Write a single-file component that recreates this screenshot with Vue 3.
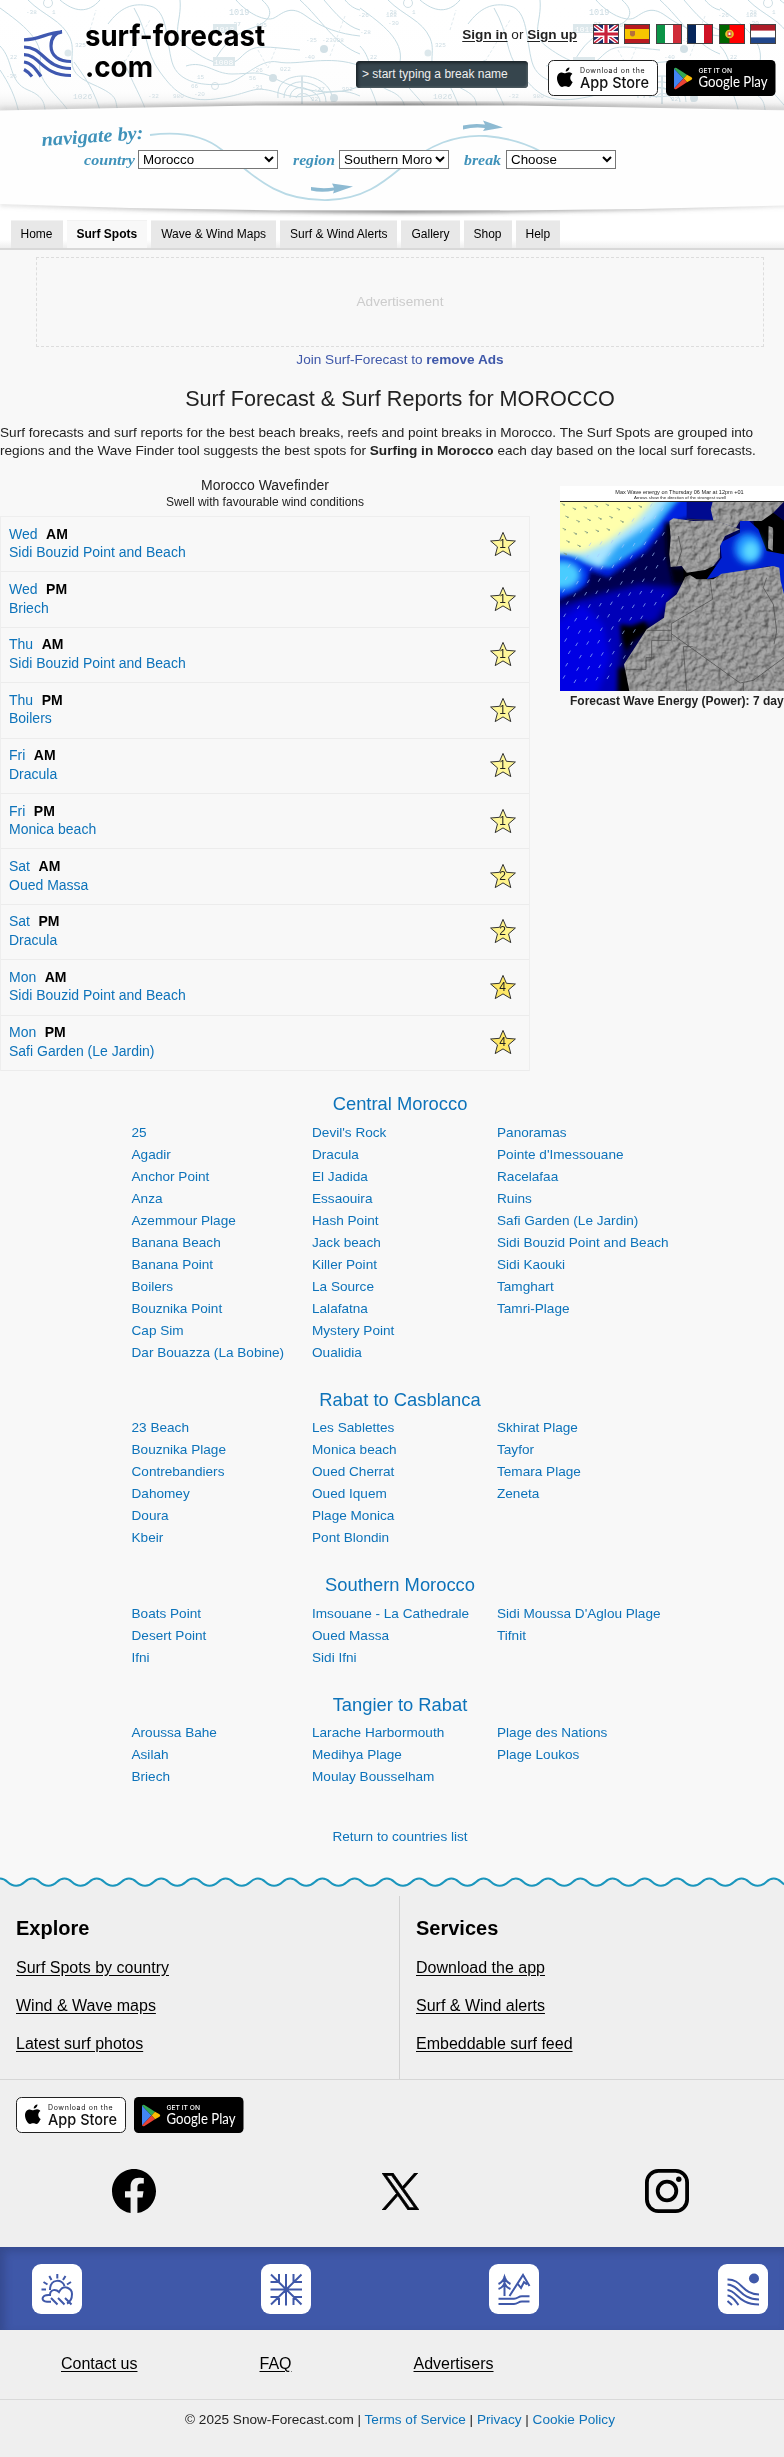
<script setup>
const tabs = ['Home', 'Surf Spots', 'Wave & Wind Maps', 'Surf & Wind Alerts', 'Gallery', 'Shop', 'Help']

const finder = [
  ['Wed', 'AM', 'Sidi Bouzid Point and Beach', 1],
  ['Wed', 'PM', 'Briech', 1],
  ['Thu', 'AM', 'Sidi Bouzid Point and Beach', 1],
  ['Thu', 'PM', 'Boilers', 1],
  ['Fri', 'AM', 'Dracula', 1],
  ['Fri', 'PM', 'Monica beach', 1],
  ['Sat', 'AM', 'Oued Massa', 2],
  ['Sat', 'PM', 'Dracula', 2],
  ['Mon', 'AM', 'Sidi Bouzid Point and Beach', 4],
  ['Mon', 'PM', 'Safi Garden (Le Jardin)', 4],
]

const regions = [
  {
    name: 'Central Morocco',
    cols: [
      ['25', 'Agadir', 'Anchor Point', 'Anza', 'Azemmour Plage', 'Banana Beach', 'Banana Point', 'Boilers', 'Bouznika Point', 'Cap Sim', 'Dar Bouazza (La Bobine)'],
      ["Devil's Rock", 'Dracula', 'El Jadida', 'Essaouira', 'Hash Point', 'Jack beach', 'Killer Point', 'La Source', 'Lalafatna', 'Mystery Point', 'Oualidia'],
      ['Panoramas', "Pointe d'Imessouane", 'Racelafaa', 'Ruins', 'Safi Garden (Le Jardin)', 'Sidi Bouzid Point and Beach', 'Sidi Kaouki', 'Tamghart', 'Tamri-Plage'],
    ],
  },
  {
    name: 'Rabat to Casblanca',
    cols: [
      ['23 Beach', 'Bouznika Plage', 'Contrebandiers', 'Dahomey', 'Doura', 'Kbeir'],
      ['Les Sablettes', 'Monica beach', 'Oued Cherrat', 'Oued Iquem', 'Plage Monica', 'Pont Blondin'],
      ['Skhirat Plage', 'Tayfor', 'Temara Plage', 'Zeneta'],
    ],
  },
  {
    name: 'Southern Morocco',
    cols: [
      ['Boats Point', 'Desert Point', 'Ifni'],
      ['Imsouane - La Cathedrale', 'Oued Massa', 'Sidi Ifni'],
      ["Sidi Moussa D'Aglou Plage", 'Tifnit'],
    ],
  },
  {
    name: 'Tangier to Rabat',
    cols: [
      ['Aroussa Bahe', 'Asilah', 'Briech'],
      ['Larache Harbormouth', 'Medihya Plage', 'Moulay Bousselham'],
      ['Plage des Nations', 'Plage Loukos'],
    ],
  },
]

const explore = ['Surf Spots by country', 'Wind & Wave maps', 'Latest surf photos']
const services = ['Download the app', 'Surf & Wind alerts', 'Embeddable surf feed']

const step = 32.24
let wave = 'M-16.1 8.8'
for (let i = 0; i < 26; i++) {
  const x = i * step - 16.1
  wave += ` C${x + 9} 8.8 ${x + 8} 1.6 ${x + 16.1} 1.6 S${x + 23.2} 8.8 ${x + step} 8.8`
}
const waveFill = wave + ' V12 H-16 Z'

// Pressure-chart contours behind the masthead, one tile 360px wide
const contours = [
  'M0 8 C22 24 44 40 40 62 S62 96 74 120',
  'M28 0 C44 16 62 20 70 38 S60 70 92 84 S112 100 120 116',
  'M0 46 C14 60 8 82 28 90 S44 108 46 120',
  'M0 70 C8 82 16 96 20 118',
  'M108 24 C120 8 132 2 150 6 S166 40 172 62 S206 86 224 84 S258 58 278 62 S330 54 360 66',
  'M134 8 C150 36 144 50 160 72 S188 104 222 98 S252 84 282 94 S330 82 360 96',
  'M180 0 C182 22 170 34 186 46 S226 72 240 58 S258 46 300 50',
  'M236 0 C248 14 266 22 274 18 S290 4 306 16 S340 34 360 36',
  'M262 0 C276 12 270 22 252 28 S222 46 214 62',
  'M300 0 C322 20 334 44 360 54',
  'M324 0 C336 14 346 26 360 30',
  'M345 0 C350 6 355 9 360 10',
  'M186 66 C204 60 214 74 232 74 S260 70 274 78 S330 100 360 86',
  'M278 98 C276 80 292 76 303 76 S334 84 332 102',
  'M284 98 C284 86 294 81 303 82 S326 88 326 102',
  'M290 98 C290 90 298 86 304 88 S320 94 320 102',
  'M296 98 C298 92 308 91 313 101',
  'M74 62 C84 76 96 92 102 118',
  'M124 60 C130 80 144 100 148 118',
  'M60 0 C74 12 88 14 100 0',
]
const marks = [
  ['1019', 229, 15, 8.5], ['-38', 26, 14, 6], ['1', 52, 14, 6], ['-26', 358, 17, 6], ['188', 386, 17, 6],
  ['-28', 360, 34, 6], ['-30', 388, 25, 6], ['-35', 306, 42, 6], ['-23', 322, 42, 6], ['098', 333, 42, 6],
  ['-40', 304, 59, 6], ['-26', 252, 72, 6], ['56', 249, 80, 6], ['022', 280, 71, 6], ['-31', 252, 89, 6],
  ['1026', 73, 99, 8], ['-36', 6, 78, 6], ['22', 10, 59, 6], ['325', 75, 47, 6], ['15', 197, 79, 6],
  ['66', 191, 88, 6], ['980', 173, 98, 6], ['-20', 194, 96, 6], ['-27', 314, 91, 6], ['992', 342, 91, 6],
  ['195', 256, 27, 6], ['-37', 230, 26, 6], ['32', 311, 101, 6], ['-32', 148, 98, 6],
]

const arrows = []
for (let i = 0; i < 15; i++) {
  for (let j = 0; j < 11; j++) {
    const y = 100 + i * 37 + ((j * 13) % 17)
    const x = 70 + j * 33 + ((i * 11) % 19)
    const limit = y < 320 ? 375 : y < 430 ? 375 - (y - 320) * 0.1 : 340 - (y - 430) * 0.62
    if (x < limit && y < 650) arrows.push({ x, y, dark: x + (y - 100) * 1.6 < 330 })
  }
}
</script>

<template>
  <div class="page">
    <header class="masthead">
      <svg class="backdrop" width="784" height="250" viewBox="0 0 784 250" aria-hidden="true">
        <defs>
          <linearGradient id="fade" x1="0" x2="0" y1="0" y2="1">
            <stop offset="0" stop-color="#fff" stop-opacity="0" />
            <stop offset=".82" stop-color="#eee" stop-opacity=".1" />
            <stop offset="1" stop-color="#bbb" stop-opacity=".4" />
          </linearGradient>
          <linearGradient id="edge" x1="0" x2="1" y1="0" y2="0">
            <stop offset="0" stop-color="#aaa" stop-opacity=".35" />
            <stop offset=".5" stop-color="#555" />
            <stop offset="1" stop-color="#aaa" stop-opacity=".35" />
          </linearGradient>
          <linearGradient id="shelf" x1="0" x2="0" y1="0" y2="1">
            <stop offset="0" stop-color="#fff" />
            <stop offset=".7" stop-color="#fff" />
            <stop offset="1" stop-color="#eaeaea" />
          </linearGradient>
          <filter id="soft" x="-5%" y="-100%" width="110%" height="300%"><feGaussianBlur stdDeviation="2" /></filter>
          <clipPath id="topclip"><rect width="784" height="112" /></clipPath>
          <g id="tile">
            <path v-for="(c, i) in contours" :key="i" :d="c" fill="none" stroke="#c3dae2" stroke-width="1" />
            <text v-for="(m, i) in marks" :key="'m' + i" :x="m[1]" :y="m[2]" :font-size="m[3]" fill="#cbdbe2" font-family="Liberation Mono, monospace">{{ m[0] }}</text>
            <rect x="213" y="24" width="24" height="9" fill="#dbe7eb" /><rect x="213" y="57" width="22" height="9" fill="#dbe7eb" />
            <text x="215" y="31.500" font-size="8" fill="#fff" font-family="Liberation Mono, monospace">1013</text>
            <text x="214" y="64.500" font-size="8" fill="#fff" font-family="Liberation Mono, monospace">1008</text>
            <circle cx="324" cy="49" r="4" fill="#d0dfe5" /><circle cx="273" cy="78" r="4" fill="#d0dfe5" />
            <circle cx="334" cy="98" r="4" fill="#d0dfe5" /><circle cx="68" cy="53" r="3.500" fill="#dbe7eb" />
            <circle cx="48" cy="3" r="4.500" fill="none" stroke="#d0dfe5" /><circle cx="215" cy="86" r="3.500" fill="none" stroke="#d0dfe5" />
            <path d="M302 76V104" stroke="#d3e1e7" stroke-width="2" />
            <path d="M258 50L268 68L276 48M345 16L330 56M120 70L150 20M90 30L96 10" stroke="#e1ebef" fill="none" stroke-dasharray="3 2" />
          </g>
        </defs>
        <rect width="784" height="250" fill="#fff" />
        <g clip-path="url(#topclip)">
          <use href="#tile" /><use href="#tile" x="360" /><use href="#tile" x="720" />
        </g>
        <rect width="784" height="112" fill="url(#fade)" />
        <path d="M0 109.500Q400 101 800 109.500" fill="none" stroke="url(#edge)" stroke-width="4" filter="url(#soft)" />
        <path d="M0 204Q200 210.500 400 210.500T800 204" fill="none" stroke="url(#edge)" stroke-width="4" filter="url(#soft)" />
        <path d="M0 110.500L120 108L260 105.500H520L660 108L784 110.300V205.500L640 209L500 210.500H280L130 208L0 204Z" fill="#fefefe" />
        <path d="M280 210.700H500" stroke="#c4c4c4" />
        <rect class="shelf" y="216" width="784" height="34" fill="url(#shelf)" />
        <rect y="248" width="784" height="2" fill="#d8d8d8" />
        <path d="M150 135C180 131 205 136 222 150C260 182 280 201 328 200C365 199 385 181 402 167C430 145 455 134 486 136C510 138 525 143 540 151" fill="none" stroke="#b9dae6" stroke-width="1.800" />
        <path d="M311 187Q322 189 334 187.500L332 183.500L353 186.500L333 193.500L334 190.500Q322 193 311 190.500ZM463 125.500Q474 123 485 124.500L483 120.500L503 127.500L483 131L485 128Q474 126.500 463 129.500Z" fill="#8dbad2" />
      </svg>

      <div class="top">
        <svg class="logo" width="250" height="60" viewBox="0 0 250 60">
          <g fill="none" stroke="#3f58b0" stroke-width="3.200">
            <path d="M0 15.800C16 15.800 22 8.500 38 7.800C30 9 27 14 27 22C27 32 35 37.500 47 37.500" />
            <path d="M0 23C20 23 20 44.500 47 44.500" />
            <path d="M0 30.700C16 31 18 51.500 47 51.500" />
            <path d="M0 38C7 39 11 44 17 52.500M0 45.500C3 47 6 50 8 52.500" />
          </g>
          <text x="61" y="22" textLength="180" lengthAdjust="spacingAndGlyphs" class="wordmark">surf-forecast</text>
          <text x="61" y="53" textLength="68" lengthAdjust="spacingAndGlyphs" class="wordmark">.com</text>
        </svg>
        <div class="tools">
          <div class="account">
            <span class="sign"><a>Sign in</a> or <a>Sign up</a></span>
            <div class="flags">
              <svg viewBox="0 0 26 20"><rect width="26" height="20" fill="#1b2b6b" /><path d="M0 0L26 20M26 0L0 20" stroke="#fff" stroke-width="4" /><path d="M0 0L26 20M26 0L0 20" stroke="#c8213b" stroke-width="1.400" /><path d="M13 0V20M0 10H26" stroke="#fff" stroke-width="6" /><path d="M13 0V20M0 10H26" stroke="#c8213b" stroke-width="3.200" /></svg>
              <svg viewBox="0 0 26 20"><rect width="26" height="20" fill="#b81a20" /><rect y="5" width="26" height="10" fill="#f7c500" /><path d="M6 7H11V11Q8.500 14 6 11Z" fill="#b5703c" /></svg>
              <svg viewBox="0 0 26 20"><rect width="26" height="20" fill="#fff" /><rect width="9" height="20" fill="#0b9447" /><rect x="17" width="9" height="20" fill="#d02c39" /></svg>
              <svg viewBox="0 0 26 20"><rect width="26" height="20" fill="#fff" /><rect width="9" height="20" fill="#06265a" /><rect x="17" width="9" height="20" fill="#cf1226" /></svg>
              <svg viewBox="0 0 26 20"><rect width="26" height="20" fill="#f00" /><rect width="10.500" height="20" fill="#060" /><circle cx="10.500" cy="10" r="4.300" fill="#e6c52a" /><rect x="8.500" y="7.500" width="4" height="5" fill="#d33" /><rect x="9.500" y="8.500" width="2" height="2.500" fill="#fff" /></svg>
              <svg viewBox="0 0 26 20"><rect width="26" height="20" fill="#fff" /><rect width="26" height="6.600" fill="#ae1c28" /><rect y="13.400" width="26" height="6.600" fill="#21468b" /></svg>
            </div>
          </div>
          <div class="finders">
            <div class="search">&gt; start typing a break name</div>
            <svg class="badge" viewBox="0 0 110 36"><use href="#appstore" /></svg>
            <svg class="badge" viewBox="0 0 110 36"><use href="#gplay" /></svg>
          </div>
        </div>
      </div>

      <div class="navigate">
        <svg class="navtitle" width="110" height="34" viewBox="0 0 110 34"><text class="script" x="2" y="26" font-size="19" textLength="102" lengthAdjust="spacingAndGlyphs" transform="rotate(-4 2 26)">navigate by:</text></svg>
        <div class="pickers">
          <svg width="54" height="22" viewBox="0 0 54 22"><text class="script" x="0" y="14.500" font-size="15" textLength="51" lengthAdjust="spacingAndGlyphs">country</text></svg>
          <select class="pick country"><option>Morocco</option></select>
          <svg class="l2" width="46" height="22" viewBox="0 0 46 22"><text class="script" x="0" y="14.500" font-size="15" textLength="42" lengthAdjust="spacingAndGlyphs">region</text></svg>
          <select class="pick"><option>Southern Morocco</option></select>
          <svg class="l3" width="42" height="22" viewBox="0 0 42 22"><text class="script" x="0" y="14.500" font-size="15" textLength="37" lengthAdjust="spacingAndGlyphs">break</text></svg>
          <select class="pick"><option>Choose</option></select>
        </div>
      </div>

      <nav class="tabs">
        <a v-for="t in tabs" :key="t" :class="{ on: t === 'Surf Spots' }">{{ t }}</a>
      </nav>
    </header>

    <svg class="defs" width="0" height="0" aria-hidden="true">
      <defs>
        <g id="appstore">
          <rect x=".5" y=".5" width="109" height="35" rx="5" fill="#fff" stroke="#222" />
          <path d="M21.500 7.500C21.600 9.800 19.700 11.500 17.700 11.500C17.500 9.400 19.500 7.600 21.500 7.500ZM24.300 22.500C23.300 25 21.800 27 20.300 27C19.100 27 18.500 26.300 17.200 26.300C15.800 26.300 15.100 27 14.100 27C11.800 27 9 22.300 9 18.300C9 14.500 11.300 12.400 13.700 12.400C15.200 12.400 16.200 13.300 17.200 13.300C18.200 13.300 19.400 12.300 21.100 12.300C22.500 12.300 23.700 13 24.400 14.100C21.200 16 21.800 20.900 25 22.300Z" fill="#000" />
          <text x="32" y="12.800" font-size="7" textLength="64.500" class="bt">Download on the</text>
          <text x="32" y="27.500" font-size="15" textLength="69" lengthAdjust="spacingAndGlyphs" class="bt heavy">App Store</text>
        </g>
        <g id="gplay">
          <rect width="109.500" height="36" rx="4.500" fill="#000" />
          <path d="M8 8.500V28.500L17.500 18.500Z" fill="#4285f4" /><path d="M8 8.500Q9 7.300 10.500 8L21 14.800L17.500 18.500Z" fill="#34a853" />
          <path d="M21 14.800L25.500 17.300Q27 18.500 25.500 19.700L21 22.300L17.500 18.500Z" fill="#fbbc04" /><path d="M8 28.500Q9 29.700 10.500 29L21 22.300L17.500 18.500Z" fill="#ea4335" />
          <text x="32.500" y="12.700" font-size="6.500" textLength="33.500" lengthAdjust="spacingAndGlyphs" class="bt white heavy">GET IT ON</text>
          <text x="32.500" y="27" font-size="14.500" textLength="69" lengthAdjust="spacingAndGlyphs" class="bt white gp">Google Play</text>
        </g>
      </defs>
    </svg>

    <main>
      <div class="ad">Advertisement</div>
      <p class="join">Join Surf-Forecast to <b>remove Ads</b></p>
      <h1>Surf Forecast &amp; Surf Reports for MOROCCO</h1>
      <p class="intro">Surf forecasts and surf reports for the best beach breaks, reefs and point breaks in Morocco. The Surf Spots are grouped into<br />regions and the Wave Finder tool suggests the best spots for <b>Surfing in Morocco</b> each day based on the local surf forecasts.</p>

      <div class="split">
        <section class="finder">
          <h2>Morocco Wavefinder</h2>
          <p class="sub">Swell with favourable wind conditions</p>
          <div class="rows">
            <div v-for="(r, i) in finder" :key="i" class="row">
              <div class="when"><div><a>{{ r[0] }}</a><b>{{ r[1] }}</b></div><a>{{ r[2] }}</a></div>
              <svg width="28" height="26" viewBox="0 0 28 26">
                <path d="M14 1.400L17.400 9.300L26.400 10L19.500 15.900L21.800 24.600L14 19.900L6.200 24.600L8.500 15.900L1.600 10L10.600 9.300Z" :fill="r[3] === 4 ? '#ffe866' : r[3] === 2 ? '#fff38a' : '#fff799'" stroke="#333" stroke-width="1" />
                <text x="13.700" y="17.200" text-anchor="middle" class="rating">{{ r[3] }}</text>
              </svg>
            </div>
          </div>
        </section>

        <section class="energy">
          <svg width="224" height="205" viewBox="60 45 672 615">
            <defs>
              <filter id="b14" x="-30%" y="-30%" width="160%" height="160%"><feGaussianBlur stdDeviation="9" /></filter>
              <filter id="b8" x="-30%" y="-30%" width="160%" height="160%"><feGaussianBlur stdDeviation="6" /></filter>
              <filter id="rough" x="0" y="0" width="100%" height="100%" color-interpolation-filters="sRGB">
                <feTurbulence type="fractalNoise" baseFrequency=".05" numOctaves="3" seed="4" result="n" />
                <feDiffuseLighting in="n" surfaceScale="6" lighting-color="#a8a8a8" result="l"><feDistantLight azimuth="225" elevation="64" /></feDiffuseLighting>
                <feComposite in="l" in2="SourceGraphic" operator="in" />
              </filter>
              <clipPath id="sea"><rect x="60" y="92" width="672" height="568" /></clipPath>
            </defs>
            <rect x="60" y="45" width="672" height="615" fill="#fff" />
            <g clip-path="url(#sea)">
              <rect x="60" y="92" width="672" height="568" fill="#000050" />
              <path d="M40 410L180 370L300 340L410 350L350 450L250 480L230 680H40Z" fill="#0000b8" filter="url(#b14)" />
              <path d="M40 460L130 400L190 460L210 560L170 680H40Z" fill="#0000e4" filter="url(#b14)" />
              <path d="M40 60H520V140L460 135L385 160L320 240L205 318L150 300L140 340L60 385H40Z" fill="#0020e0" filter="url(#b8)" />
              <path d="M40 60H440L380 130L310 225L210 292L150 280L40 250Z" fill="#2aa4f8" filter="url(#b8)" />
              <path d="M40 60H410L340 150L230 225L180 290L110 255L40 245Z" fill="#a8e4ff" filter="url(#b14)" />
              <path d="M40 60H370L290 150L200 215L130 245L40 245Z" fill="#ffffac" filter="url(#b14)" />
              <ellipse cx="65" cy="312" rx="74" ry="58" fill="#0040f0" filter="url(#b8)" />
              <ellipse cx="65" cy="312" rx="55" ry="42" fill="#48ccff" filter="url(#b14)" />
              <path d="M240 460L275 465L315 450L330 480L280 510L258 540L245 500ZM235 590H280V670H235Z" fill="#000" filter="url(#b8)" />
              <path d="M375 155H400V290H440V340L400 340L380 250Z" fill="#000010" filter="url(#b8)" />
              <path d="M440 92H520V150L440 140Z" fill="#000a90" />
              <path d="M640 150L695 124L732 150V260H660ZM430 285H550V335H430Z" fill="#000" />
              <path d="M600 148L625 148L655 175L680 240L732 250V380L715 330L690 285L560 310L500 325L545 260L540 215L600 185Z" fill="#0020d0" />
              <ellipse cx="625" cy="232" rx="42" ry="46" fill="#1e90ff" filter="url(#b14)" /><ellipse cx="632" cy="240" rx="25" ry="30" fill="#5cd8ff" filter="url(#b14)" />
              <g v-for="(a, i) in arrows" :key="i" :transform="`translate(${a.x} ${a.y})`">
                <path v-if="a.dark" d="M-5 -2L5 2M5 2L0 3" stroke="#7f9a80" stroke-width="2.500" />
                <path v-else d="M-3 5L3 -5" stroke="#a8c8ff" stroke-width="2" />
              </g>
              <g fill="#999" filter="url(#rough)">
                <path d="M518 92H732L700 125L665 150L600 150L588 170L520 148L512 115Z" />
                <path d="M388 150L400 142L460 150L525 148L600 175L555 195L540 225L540 260L520 285L495 297L440 305L425 285L392 288L388 250L392 200Z" />
                <path d="M436 318L450 312L470 325L520 325L545 308L700 285L718 290L722 330L732 370V660H268L252 580L320 475L372 440L378 395L410 370Z" />
                <path d="M686 165L700 170L698 240L684 232Z" />
              </g>
              <path d="M700 125L732 150V240L710 210L695 160Z" fill="#000" />
              <path d="M510 325L518 385L394 458V508H335V560H318V595H258M320 478H394M394 488L600 636L640 628L732 560M440 660L430 527H458M610 636V660M680 320L670 350L700 400L710 480L702 520M415 195L425 240L410 285M440 145L520 148" fill="none" stroke="#444" stroke-width="2" />
            </g>
            <path d="M60 91.500H732" stroke="#222" stroke-width="3" />
            <text x="226" y="68" font-size="18" textLength="385" lengthAdjust="spacingAndGlyphs" class="maptext">Max Wave energy on Thursday 06 Mar at 12pm +01</text>
            <text x="282" y="85" font-size="13" textLength="276" lengthAdjust="spacingAndGlyphs" class="maptext">Arrows show the direction of the strongest swell</text>
          </svg>
          <p>Forecast Wave Energy (Power): 7 day</p>
        </section>
      </div>

      <section v-for="g in regions" :key="g.name" class="region">
        <h3>{{ g.name }}</h3>
        <div class="cols">
          <ul v-for="(c, i) in g.cols" :key="i"><li v-for="s in c" :key="s"><a>{{ s }}</a></li></ul>
        </div>
      </section>
      <p class="return"><a>Return to countries list</a></p>
    </main>

    <svg class="wave" width="784" height="12" viewBox="0 0 784 12"><path :d="waveFill" fill="#efefef" /><path :d="wave" fill="none" stroke="#1b96bd" stroke-width="2" /></svg>

    <footer>
      <div class="links">
        <div><h4>Explore</h4><a v-for="l in explore" :key="l">{{ l }}</a></div>
        <div><h4>Services</h4><a v-for="l in services" :key="l">{{ l }}</a></div>
      </div>
      <div class="apps">
        <svg class="badge" viewBox="0 0 110 36"><use href="#appstore" /></svg>
        <svg class="badge" viewBox="0 0 110 36"><use href="#gplay" /></svg>
      </div>
      <div class="social">
        <svg width="44" height="44" viewBox="0 0 24 24"><path d="M24 12.073C24 5.405 18.627 0 12 0S0 5.405 0 12.073C0 18.100 4.388 23.094 10.125 24V15.563H7.078V12.073H10.125V9.413C10.125 6.387 11.917 4.716 14.658 4.716C15.971 4.716 17.344 4.951 17.344 4.951V7.923H15.831C14.340 7.923 13.875 8.853 13.875 9.808V12.073H17.203L16.671 15.563H13.875V24C19.612 23.094 24 18.100 24 12.073Z" /></svg>
        <svg width="37" height="37" viewBox="0 0 24 24"><path stroke="#000" stroke-width=".5" d="M14.280 10.160L23.220 0H21.100L13.340 8.820L7.150 0H0L9.370 13.340L0 24H2.120L10.310 14.670L16.850 24H24ZM11.380 13.460L10.430 12.130L2.880 1.560H6.130L12.220 10.070L13.170 11.400L21.100 22.480H17.840Z" /></svg>
        <svg width="44" height="44" viewBox="0 0 44 44"><g fill="none" stroke="#000" stroke-width="3.800"><rect x="1.900" y="1.900" width="40.200" height="40.200" rx="11.500" /><circle cx="22" cy="22" r="9.300" /></g><circle cx="33.800" cy="10.200" r="2.700" /></svg>
      </div>
      <div class="family">
        <svg viewBox="0 0 50 50"><g fill="none" stroke="#3f58a9" stroke-width="2"><path d="M25.300 10V14.500M17.300 12L19.500 16M33.500 12L31 16M11.500 18L15.500 20.500M39 18L35 20.500M9.500 25.500H14M18 26C18 14 31 15 32.500 22M19 37.800H15C8.500 37.500 9 30.300 18 31C18 25 24 25 27 28C32 19 40 25 40 30C40 35 38 38 35 39.500M19 34L25.500 40.500M26 34L32.500 40.500M33 34L39.500 40.500" /></g></svg>
        <svg viewBox="0 0 50 50"><g fill="none" stroke="#3f58a9" stroke-width="2"><path d="M25 10V41.500M9.500 25.500H41M10 10.500L40.500 40.500M40.500 10.500L10 40.500M18 10V18H9.500M32.500 10V18H41M18 41V33H9.500M32.500 41V33H41" /></g></svg>
        <svg viewBox="0 0 50 50"><g fill="none" stroke="#3f58a9" stroke-width="2"><path d="M15.500 12V32M9.500 20Q14 18 15.500 13Q17 18 21.500 20M9.500 25Q14 23.500 15.500 19Q17 23.500 21.500 25M20.500 32L34 11L40.500 22M28.500 19.500L32 24L35 18L38 20.500M9.500 34.800H25C29 34.800 29 32.200 33 32.200H40.500M9.500 40H25C29 40 29 37.500 33 37.500H40.500" /></g></svg>
        <svg viewBox="0 0 50 50"><circle cx="36" cy="14.500" r="5" fill="#3f58a9" /><g fill="none" stroke="#3f58a9" stroke-width="2"><path d="M9.500 15.500C24 15 24 30.500 41 30.500M9.500 20.500C22 21 22 35.500 41 35.500M9.500 26C19 26.500 20 40.500 41 40.500M9.500 31.500C15 32 17 37 20.500 41M9.500 37L14 41" /></g></svg>
      </div>
      <div class="help"><a>Contact us</a><a>FAQ</a><a>Advertisers</a></div>
      <p class="legal">© 2025 Snow-Forecast.com | <a>Terms of Service</a> | <a>Privacy</a> | <a>Cookie Policy</a></p>
    </footer>
  </div>
</template>

<style>
body { background: #efefef; }
</style>

<style scoped>
* { box-sizing: border-box; margin: 0; }
.page { width: 784px; height: 2457px; overflow: hidden; background: #f8f8f8; color: #222; font: 13.6px "Liberation Sans", Arial, sans-serif; }
.masthead { position: relative; height: 250px; width: 784px; }
.backdrop { position: absolute; left: 0; top: 0; }
.shelf { mix-blend-mode: multiply; }
.defs { display: block; }
.top { position: relative; display: flex; justify-content: space-between; height: 120px; padding: 24px 8px 0 24px; }
.logo { display: block; overflow: visible; }
.wordmark { font: 700 29px Inter, "Liberation Sans", sans-serif; fill: #000; }
.tools { width: 420px; }
.account { display: flex; justify-content: flex-end; align-items: center; height: 20px; }
.sign { font-size: 13.6px; margin-right: 16px; white-space: nowrap; }
.sign a { font-weight: bold; text-decoration: underline; text-underline-offset: 2px; }
.flags { display: flex; gap: 5.4px; }
.flags svg { display: block; width: 26px; height: 20px; outline: 1px solid #444; outline-offset: -1px; }
.finders { display: flex; align-items: flex-start; margin-top: 16px; }
.search { width: 172px; height: 27px; margin-top: 1px; margin-right: 20px; border-radius: 4px; background: #36454d; box-shadow: inset 1px 1px 3px 1px #1b2429, inset -1px -1px 2px #77858c; color: #eee; font-size: 12px; line-height: 26px; padding-left: 6px; }
.badge { display: block; width: 110px; height: 36px; margin-right: 8px; }
.finders .badge:last-child { margin-right: 0; }
.bt { font-family: Inter, "Liberation Sans", sans-serif; fill: #111; }
.heavy { font-weight: 500; }
.white { fill: #fff; }
.gp { font-family: Lato, sans-serif; }
.navigate { position: relative; height: 100px; padding: 0 0 0 40px; }
.navtitle { display: block; overflow: visible; }
.script { font-family: "Liberation Serif", serif; font-style: italic; font-weight: bold; fill: #3f92ba; }
.pickers { display: flex; align-items: flex-start; margin: -4px 0 0 44px; }
.pickers svg { display: block; overflow: visible; }
.l2 { margin-left: 15px; }
.l3 { margin-left: 15px; }
.pick { width: 110px; height: 19px; font: 13.333px "Liberation Sans", sans-serif; background: #fff; color: #000; border: 1px solid #767676; border-radius: 0; padding: 0; margin: 0; }
.country { width: 140px; }
.tabs { position: relative; display: flex; gap: 4px; padding-left: 10.500px; font-size: 12px; color: #000; }
.tabs a { height: 28px; line-height: 26px; padding: 0 10px; background: #e8e8e8; border-top: 1px solid #f2f2f2; }
.tabs .on { background: #f8f8f8; font-weight: bold; }
a { color: #0d73ba; }
.sign a, .tabs a { color: inherit; }
.ad { width: 728px; height: 90px; margin: 7px 0 0 36px; border: 1px dashed #ddd; color: #ccc; text-align: center; line-height: 87px; }
.join { width: 800px; margin-top: 5px; text-align: center; color: #3f58a9; line-height: 16px; }
h1 { width: 800px; margin-top: 18px; text-align: center; font-size: 21.600px; line-height: 26px; font-weight: normal; }
.intro { margin-top: 12px; font-size: 13.600px; line-height: 18px; white-space: nowrap; }
.split { display: flex; margin-top: 17px; height: 616px; }
.finder { width: 530px; }
h2 { text-align: center; font-size: 14px; line-height: 18px; font-weight: normal; margin-top: -1.500px; }
.sub { text-align: center; font-size: 12px; line-height: 16px; margin-top: .5px; }
.rows { margin-top: 6px; border: 1px solid #eee; border-width: 1px 1px 0; font-size: 14px; }
.row { display: flex; justify-content: space-between; align-items: center; height: 55.400px; border-bottom: 1px solid #ececec; padding: 0 12px 1px 8px; line-height: 18.500px; }
.when { padding-bottom: 1px; }
.when b { margin-left: 8.500px; color: #000; }
.rating { font: 12px "Liberation Sans", sans-serif; fill: #222; }
.energy { margin: 9px 0 0 30px; width: 224px; }
.energy svg { display: block; }
.energy p { font-size: 12px; font-weight: bold; white-space: nowrap; padding-left: 10px; line-height: 20px; }
.maptext { font-family: "Liberation Sans", sans-serif; fill: #222; }
.region { margin-bottom: 25px; }
h3 { width: 800px; height: 29px; line-height: 22px; text-align: center; font-size: 18.360px; font-weight: normal; color: #0d73ba; }
.cols { display: grid; grid-template-columns: 180.500px 185px 200px; margin-left: 131.500px; line-height: 22px; }
.cols ul { list-style: none; padding: 0; margin-top: -.5px; }
.return { width: 800px; text-align: center; line-height: 20px; margin-top: 39px; }
.wave { display: block; margin-top: 30px; }
footer { background: #efefef; color: #000; height: 600px; }
.links { display: grid; grid-template-columns: 400px 384px; border-bottom: 1px solid #d6d6d6; height: 191px; padding-top: 7px; }
.links div { padding: 20px 16px 0; display: flex; flex-direction: column; align-items: flex-start; }
.links div:first-child { border-right: 1px solid #d2d2d2; }
h4 { font-size: 20px; line-height: 24px; margin-bottom: 18px; }
.links a, .help a { color: #000; font-size: 16px; text-decoration: underline; text-underline-offset: 2px; }
.links a { height: 38px; line-height: 20px; }
.apps { display: flex; padding: 17px 16px 0; height: 89px; }
.social { display: grid; grid-template-columns: 267px 266px 267px; justify-items: center; align-items: center; width: 800px; height: 44px; }
.family { display: flex; justify-content: space-between; align-items: center; margin-top: 34px; height: 83px; padding: 0 16px 0 32px; background: #3f58a9; box-shadow: inset 4px 4px 8px rgba(30, 40, 80, .3); }
.family svg { display: block; width: 50px; height: 50px; background: #fff; border-radius: 9px; }
.help { display: flex; height: 70px; padding: 24px 0 0 61px; line-height: 20px; border-bottom: 1px solid #d9d9d9; }
.help a:nth-child(2) { margin-left: 122px; }
.help a:nth-child(3) { margin-left: 122px; }
.legal { width: 800px; text-align: center; line-height: 20px; margin-top: 10px; color: #222; }
</style>
